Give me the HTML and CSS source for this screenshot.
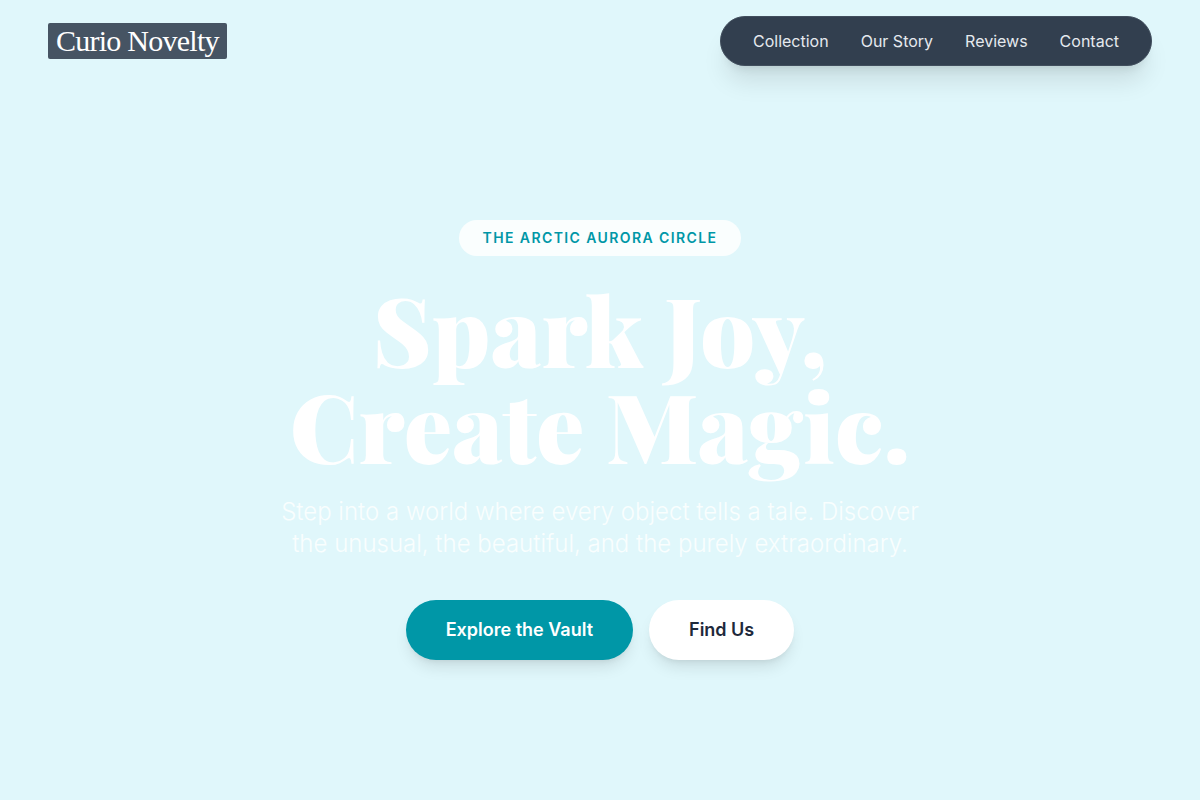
FILE: index.html
```html
<!DOCTYPE html>
<html lang="en">
<head>
  <meta charset="utf-8">
  <meta name="viewport" content="width=device-width, initial-scale=1">
  <title>Curio Novelty</title>
  <link rel="stylesheet" href="styles.css">
</head>
<body>
  <header class="site-header">
    <a class="logo" href="#">Curio Novelty</a>
    <nav class="site-nav" aria-label="Main">
      <a href="#collection">Collection</a>
      <a href="#story">Our Story</a>
      <a href="#reviews">Reviews</a>
      <a href="#contact">Contact</a>
    </nav>
  </header>
  <main class="hero">
    <span class="badge">The Arctic Aurora Circle</span>
    <h1 class="title">Spark Joy,<br>Create Magic.</h1>
    <p class="lead">Step into a world where every object tells a tale. Discover the unusual, the beautiful, and the purely extraordinary.</p>
    <div class="actions">
      <button class="button button-primary" type="button">Explore the Vault</button>
      <button class="button button-light" type="button">Find Us</button>
    </div>
  </main>
</body>
</html>
```

FILE: styles.css
```css
* {
  box-sizing: border-box;
}

body {
  display: flex;
  flex-direction: column;
  min-height: 100vh;
  margin: 0;
  background: #e0f7fb;
  font-family: Inter, "Liberation Sans", sans-serif;
  font-size: 16px;
  line-height: 24px;
}

.site-header {
  display: flex;
  align-items: center;
  justify-content: space-between;
  padding: 16px 48px;
}

.logo {
  padding: 0 8px;
  border-radius: 2px;
  background: #465463;
  color: #fff;
  font-family: "Liberation Serif", serif;
  font-size: 30px;
  line-height: 36px;
  letter-spacing: -0.025em;
  text-decoration: none;
}

.site-nav {
  display: flex;
  gap: 32px;
  padding: 12px 32px;
  border: 1px solid #414e5d;
  border-radius: 999px;
  background: #323f4f;
  box-shadow: 0 20px 25px -5px rgb(0 0 0 / 10%), 0 8px 10px -6px rgb(0 0 0 / 10%);
}

.site-nav a {
  color: #e5e9ee;
  text-decoration: none;
}

.hero {
  display: flex;
  flex: 1;
  flex-direction: column;
  align-items: center;
  justify-content: center;
  padding: 0 24px 2px;
  text-align: center;
}

.badge {
  padding: 8px 24px;
  border-radius: 999px;
  background: #fafefe;
  color: #0097a7;
  font-size: 14px;
  font-weight: 600;
  line-height: 20px;
  letter-spacing: 0.1em;
  text-transform: uppercase;
}

.title {
  margin: 24px 0;
  color: #fff;
  font-family: "Playfair Display", "Liberation Serif", serif;
  font-size: 96px;
  font-weight: 900;
  line-height: 96px;
}

.lead {
  max-width: 672px;
  margin: 0 0 40px;
  color: #f9fefe;
  font-size: 24px;
  font-weight: 300;
  line-height: 32px;
}

.actions {
  display: flex;
  flex-wrap: wrap;
  justify-content: center;
  gap: 16px;
}

.button {
  padding: 16px 40px;
  border: 0;
  border-radius: 999px;
  font-family: inherit;
  font-size: 18px;
  font-weight: 600;
  line-height: 28px;
  box-shadow: 0 10px 15px -3px rgb(0 0 0 / 10%), 0 4px 6px -4px rgb(0 0 0 / 10%);
  cursor: pointer;
}

.button-primary {
  background: #0097a7;
  color: #fff;
}

.button-light {
  background: #fff;
  color: #1e293b;
}
```
